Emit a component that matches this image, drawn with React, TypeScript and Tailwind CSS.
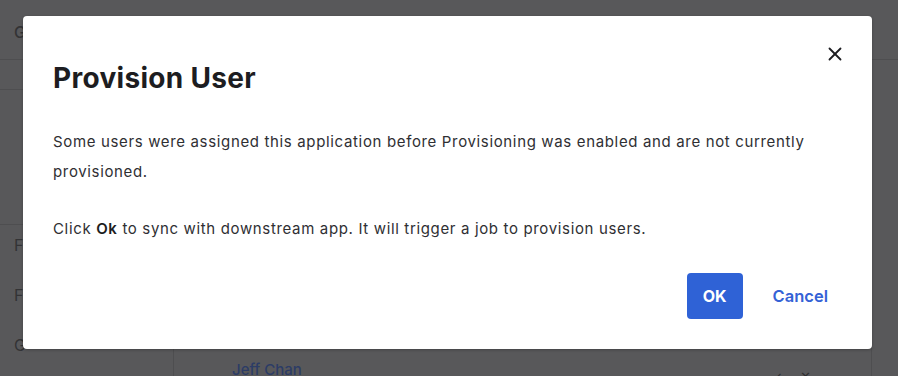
import { X } from "lucide-react";

function Background() {
  return (
    <div className="flex h-[376px] w-[898px] flex-col overflow-hidden bg-[#58585a] font-['Inter',sans-serif] text-[#333335]">
      <div className="flex h-[60px] items-center border-b border-[#4e4e50] px-[14px] pt-[4px] text-[16px] font-medium">
        G
      </div>
      <div className="flex flex-1">
        <div className="flex w-[174px] flex-col border-r border-[#4e4e50]">
          <div className="h-[30px] border-b border-[#4e4e50]" />
          <div className="h-[135px] border-b border-[#4e4e50]" />
          <div className="flex flex-col gap-[26px] px-[14px] pt-[8px] text-[16px]">
            <span>F</span>
            <span>F</span>
            <span>G</span>
          </div>
        </div>
        <div className="flex flex-1 flex-col justify-end">
          <div className="flex items-end justify-between pl-[58px] pr-[60px]">
            <span className="translate-y-[3px] text-[15px] font-medium leading-[18px] text-[#2c3c66]">Jeff Chan</span>
            <div className="flex translate-y-[7px] gap-[18px] text-[13px] leading-[14px] text-[#2e2e30]">
              <span>✓</span>
              <span>✕</span>
            </div>
          </div>
        </div>
        <div className="w-[27px] border-l border-[#4e4e50]" />
      </div>
    </div>
  );
}

export default function App() {
  return (
    <div className="relative h-[376px] w-[898px] overflow-hidden">
      <Background />
      <div className="absolute left-[23px] top-[16px] flex h-[333px] w-[849px] flex-col rounded-[4px] bg-white pl-[30px] pr-[44px] font-['Inter',sans-serif] shadow-[0_1px_3px_rgba(0,0,0,0.25)]">
        <div className="flex items-start justify-between pt-[44px]">
          <h1 className="text-[28px] font-bold leading-[36px] tracking-[0.3px] text-[#1d1d21]">Provision User</h1>
          <button className="mr-[-18px] mt-[-17px] text-[#1d1d21]">
            <X size={22} strokeWidth={2} />
          </button>
        </div>
        <div className="mt-[31px] text-[15px] leading-[30px] tracking-[0.65px] text-[#2f2f33]">
          <p>
            Some users were assigned this application before Provisioning was enabled and are not currently
            provisioned.
          </p>
          <p className="mt-[27px]">
            Click <span className="font-semibold text-[#1d1d21]">Ok</span> to sync with downstream app. It will
            trigger a job to provision users.
          </p>
        </div>
        <div className="mt-auto mb-[30px] flex items-center justify-end gap-[30px]">
          <button className="h-[46px] w-[56px] rounded-[4px] bg-[#2f62d6] text-[16px] font-bold text-white">
            OK
          </button>
          <button className="text-[16.5px] font-semibold text-[#3462d6]">Cancel</button>
        </div>
      </div>
    </div>
  );
}
